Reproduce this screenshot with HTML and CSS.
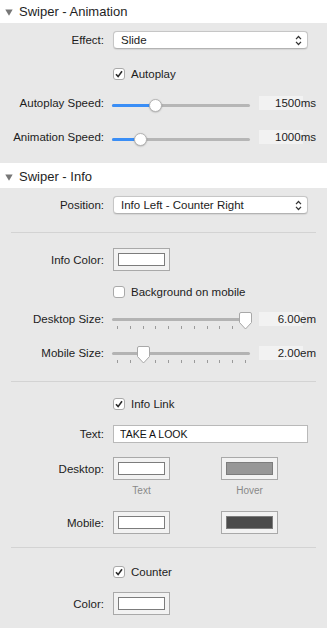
FILE: index.html
```html
<!DOCTYPE html>
<html lang="en">
  <head>
    <meta charset="UTF-8" />
    <meta name="viewport" content="width=device-width, initial-scale=1.0" />
    <title>Swiper settings</title>
    <link rel="stylesheet" href="styles.css">
  </head>
  <body>
    <!-- Animation section -->
    <div class="section-header">
      <svg class="caret" width="8" height="7" viewBox="0 0 8 7"><path d="M0.3 0.5 H7.7 L4 6.8 Z" fill="#777"/></svg>
      <span>Swiper - Animation</span>
    </div>
    <div class="panel panel-animation">
      <div class="row row-effect">
        <label class="row-label">Effect:</label>
        <div class="select">
          <span>Slide</span>
          <svg width="7" height="11" viewBox="0 0 7 11"><path d="M1 4.2 L3.5 1.5 L6 4.2 M1 6.8 L3.5 9.5 L6 6.8" fill="none" stroke="#333" stroke-width="1.2"/></svg>
        </div>
      </div>
      <div class="row row-autoplay">
        <span></span>
        <div class="check">
          <span class="box checked"><svg width="10" height="10" viewBox="0 0 10 10"><path d="M2 5.3 L4.1 7.6 L8 2.2" fill="none" stroke="#2a2a2a" stroke-width="1.6"/></svg></span>
          <span>Autoplay</span>
        </div>
      </div>
      <div class="row row-aspeed">
        <label class="row-label">Autoplay Speed:</label>
        <div class="range">
          <div class="slider">
            <div class="track"></div>
            <div class="fill" style="width:43px"></div>
            <span class="knob" style="left:36.5px"></span>
          </div>
          <span class="value">1500ms</span>
        </div>
      </div>
      <div class="row row-anspeed">
        <label class="row-label">Animation Speed:</label>
        <div class="range">
          <div class="slider">
            <div class="track"></div>
            <div class="fill" style="width:28px"></div>
            <span class="knob" style="left:21.5px"></span>
          </div>
          <span class="value">1000ms</span>
        </div>
      </div>
    </div>

    <!-- Info section -->
    <div class="section-header second">
      <svg class="caret" width="8" height="7" viewBox="0 0 8 7"><path d="M0.3 0.5 H7.7 L4 6.8 Z" fill="#777"/></svg>
      <span>Swiper - Info</span>
    </div>
    <div class="panel panel-info">
      <div class="row row-position">
        <label class="row-label">Position:</label>
        <div class="select">
          <span>Info Left - Counter Right</span>
          <svg width="7" height="11" viewBox="0 0 7 11"><path d="M1 4.2 L3.5 1.5 L6 4.2 M1 6.8 L3.5 9.5 L6 6.8" fill="none" stroke="#333" stroke-width="1.2"/></svg>
        </div>
      </div>
      <hr class="sep sep-1" />
      <div class="row row-wells row-infocolor">
        <label class="row-label">Info Color:</label>
        <div class="wells">
          <span class="well"><span class="swatch" style="background:#ffffff"></span></span>
        </div>
      </div>
      <div class="row row-bgmobile">
        <span></span>
        <div class="check">
          <span class="box"></span>
          <span>Background on mobile</span>
        </div>
      </div>
      <div class="row row-dsize">
        <label class="row-label">Desktop Size:</label>
        <div class="range">
          <div class="slider ticked">
            <div class="track"></div>
            <div class="ticks"><i></i><i></i><i></i><i></i><i></i><i></i><i></i><i></i><i></i><i></i><i></i></div>
            <svg class="pointer" style="left:127px" width="13" height="18" viewBox="0 0 13 18"><path d="M2 0.5 H11 A1.5 1.5 0 0 1 12.5 2 V10.5 L6.5 17 L0.5 10.5 V2 A1.5 1.5 0 0 1 2 0.5 Z" fill="#fff" stroke="#a8a8a8" stroke-width="1"/></svg>
          </div>
          <span class="value">6.00em</span>
        </div>
      </div>
      <div class="row row-msize">
        <label class="row-label">Mobile Size:</label>
        <div class="range">
          <div class="slider ticked">
            <div class="track"></div>
            <div class="ticks"><i></i><i></i><i></i><i></i><i></i><i></i><i></i><i></i><i></i><i></i><i></i></div>
            <svg class="pointer" style="left:24.5px" width="13" height="18" viewBox="0 0 13 18"><path d="M2 0.5 H11 A1.5 1.5 0 0 1 12.5 2 V10.5 L6.5 17 L0.5 10.5 V2 A1.5 1.5 0 0 1 2 0.5 Z" fill="#fff" stroke="#a8a8a8" stroke-width="1"/></svg>
          </div>
          <span class="value">2.00em</span>
        </div>
      </div>
      <hr class="sep sep-2" />
      <div class="row row-infolink">
        <span></span>
        <div class="check">
          <span class="box checked"><svg width="10" height="10" viewBox="0 0 10 10"><path d="M2 5.3 L4.1 7.6 L8 2.2" fill="none" stroke="#2a2a2a" stroke-width="1.6"/></svg></span>
          <span>Info Link</span>
        </div>
      </div>
      <div class="row row-text">
        <label class="row-label">Text:</label>
        <input class="text-input" type="text" value="TAKE A LOOK" />
      </div>
      <div class="row row-wells row-desktop">
        <label class="row-label">Desktop:</label>
        <div class="wells">
          <span class="well"><span class="swatch" style="background:#ffffff"></span></span>
          <span class="well"><span class="swatch" style="background:#979797"></span></span>
        </div>
      </div>
      <div class="row row-captions">
        <span></span>
        <div class="wells">
          <span class="caption">Text</span>
          <span class="caption">Hover</span>
        </div>
      </div>
      <div class="row row-wells row-mobile">
        <label class="row-label">Mobile:</label>
        <div class="wells">
          <span class="well"><span class="swatch" style="background:#ffffff"></span></span>
          <span class="well"><span class="swatch" style="background:#4b4b4b"></span></span>
        </div>
      </div>
      <hr class="sep sep-3" />
      <div class="row row-counter">
        <span></span>
        <div class="check">
          <span class="box checked"><svg width="10" height="10" viewBox="0 0 10 10"><path d="M2 5.3 L4.1 7.6 L8 2.2" fill="none" stroke="#2a2a2a" stroke-width="1.6"/></svg></span>
          <span>Counter</span>
        </div>
      </div>
      <div class="row row-wells row-color">
        <label class="row-label">Color:</label>
        <div class="wells">
          <span class="well"><span class="swatch" style="background:#ffffff"></span></span>
        </div>
      </div>
    </div>
  </body>
</html>
```

FILE: styles.css
```css
body {
  margin: 0;
  background-color: #fff;
  font-family: "Liberation Sans", Arial, sans-serif;
  font-size: 11.5px;
  color: #1c1c1c;
  height: 628px;
  overflow: hidden;
}

.section-header {
  height: 23px;
  display: flex;
  align-items: center;
  font-size: 13px;
  color: #1e1e1e;
  background-color: #fff;
}

.section-header .caret {
  margin: 1px 6px 0 5px;
}

.section-header.second {
  margin-top: 2px;
}

.panel {
  background-color: #e8e8e8;
}

.panel-animation {
  padding: 8px 0 17px 0;
}

.panel-info {
  padding: 8px 0 20px 0;
}

.row {
  display: grid;
  grid-template-columns: 104px 1fr;
  column-gap: 9px;
  align-items: center;
  height: 18px;
}

.row-label {
  text-align: right;
  white-space: nowrap;
}

/* select box */
.select {
  width: 195px;
  height: 18px;
  box-sizing: border-box;
  background-color: #fff;
  border: 1px solid #c6c6c6;
  border-bottom-color: #b3b3b3;
  border-radius: 4px;
  display: flex;
  align-items: center;
  justify-content: space-between;
  padding: 0 5px 0 7px;
  box-shadow: 0 0.5px 1px rgba(0, 0, 0, 0.08);
}

/* checkboxes */
.check {
  display: flex;
  align-items: center;
  gap: 6px;
}

.check .box {
  width: 12px;
  height: 12px;
  box-sizing: border-box;
  border: 1px solid #a9a9a9;
  border-radius: 3px;
  background-color: #fff;
  display: flex;
  align-items: center;
  justify-content: center;
}

/* sliders */
.range {
  display: flex;
  align-items: center;
  gap: 9px;
  margin-left: -1px;
}

.slider {
  position: relative;
  width: 138px;
  height: 18px;
}

.slider .track {
  position: absolute;
  left: 0;
  right: 0;
  top: 10px;
  height: 3px;
  border-radius: 2px;
  background-color: #b6b6b6;
}

.slider .fill {
  position: absolute;
  left: 0;
  top: 10px;
  height: 3px;
  border-radius: 2px;
  background-color: #3a8ef6;
}

.slider .knob {
  position: absolute;
  top: 5px;
  width: 13px;
  height: 13px;
  box-sizing: border-box;
  border-radius: 50%;
  background-color: #fff;
  border: 0.5px solid #b4b4b4;
  box-shadow: 0 0.5px 1.5px rgba(0, 0, 0, 0.25);
}

.slider.ticked .track {
  top: 7.5px;
  background-color: #b3b3b3;
}

.slider .ticks {
  position: absolute;
  left: 5px;
  right: 4px;
  top: 16px;
  height: 3px;
  display: flex;
  justify-content: space-between;
}

.slider .ticks i {
  width: 1px;
  height: 3px;
  background-color: #9a9a9a;
}

.slider .pointer {
  position: absolute;
  top: 2px;
}

.value {
  width: 57px;
  height: 14px;
  line-height: 14px;
  text-align: right;
  background: linear-gradient(#f2f2f2, #f2f2f2) no-repeat;
  background-size: 44px 100%;
}

/* separators */
.sep {
  border: 0;
  height: 1px;
  background-color: #d3d3d3;
  margin: 0 11px;
}

/* color wells */
.row-wells {
  height: 23px;
}

.wells {
  display: flex;
  gap: 51px;
}

.well {
  width: 57px;
  height: 23px;
  box-sizing: border-box;
  border: 1px solid #a9a9a9;
  background-color: #f2f2f2;
  display: flex;
  align-items: center;
  justify-content: center;
}

.swatch {
  width: 47px;
  height: 13px;
  box-sizing: border-box;
  border: 1px solid #7c7c7c;
}

.caption {
  width: 57px;
  text-align: center;
  font-size: 10px;
  color: #888;
}

.text-input {
  width: 195px;
  height: 18px;
  box-sizing: border-box;
  border: 1px solid #b9b9b9;
  background-color: #fff;
  padding: 0 6px;
  font-family: "Liberation Sans", Arial, sans-serif;
  font-size: 10.5px;
  color: #111;
  outline: none;
}

/* vertical rhythm */
.row-autoplay { margin-top: 16px; }
.row-aspeed { margin-top: 11px; }
.row-anspeed { margin-top: 16px; }

.sep-1 { margin-top: 18px; margin-bottom: 0; }
.row-infocolor { margin-top: 15px; }
.row-bgmobile { margin-top: 12px; }
.row-dsize { margin-top: 9px; }
.row-msize { margin-top: 16px; }
.sep-2 { margin-top: 19px; margin-bottom: 0; }
.row-infolink { margin-top: 13px; }
.row-text { margin-top: 12px; }
.row-desktop { margin-top: 14px; }
.row-captions { margin-top: 4px; height: 12px; }
.row-mobile { margin-top: 15px; }
.sep-3 { margin-top: 13px; margin-bottom: 0; }
.row-counter { margin-top: 15px; }
.row-color { margin-top: 11px; }
```
